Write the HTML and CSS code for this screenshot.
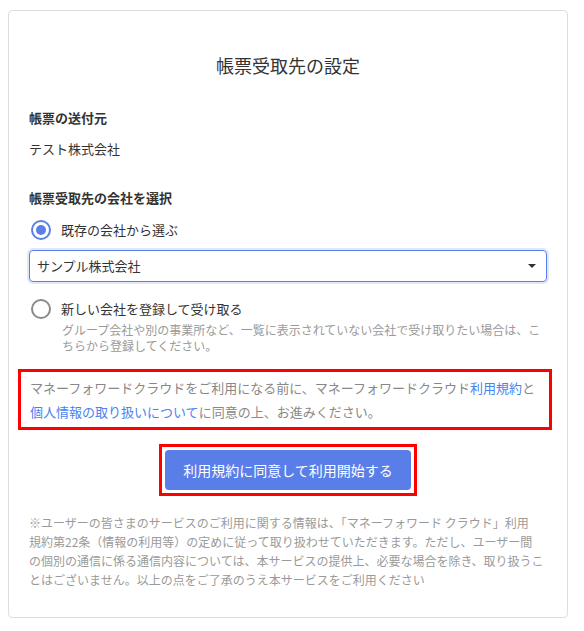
FILE: index.html
```html
<!DOCTYPE html>
<html lang="ja">
<head>
<meta charset="utf-8">
<title>帳票受取先の設定</title>
<link rel="stylesheet" href="styles.css">
</head>
<body>
<div class="card">
  <h1 class="title">帳票受取先の設定</h1>

  <div class="label label-first">帳票の送付元</div>
  <div class="value">テスト株式会社</div>

  <div class="label label-second">帳票受取先の会社を選択</div>

  <div class="radio-row radio-row-first">
    <span class="radio radio-on"></span>
    <span class="radio-label">既存の会社から選ぶ</span>
  </div>

  <div class="select">
    <span class="select-text">サンプル株式会社</span>
    <span class="select-arrow"></span>
  </div>

  <div class="radio-row radio-row-second">
    <span class="radio"></span>
    <span class="radio-label">新しい会社を登録して受け取る</span>
  </div>
  <p class="helper">グループ会社や別の事業所など、一覧に表示されていない会社で受け取りたい場合は、こちらから登録してください。</p>

  <div class="terms">マネーフォワードクラウドをご利用になる前に、マネーフォワードクラウド<a class="link" href="#">利用規約</a>と<a class="link" href="#">個人情報の取り扱いについて</a>に同意の上、お進みください。</div>

  <div class="btn-area">
    <span class="btn-frame"><button class="btn" type="button">利用規約に同意して利用開始する</button></span>
  </div>

  <p class="note">※ユーザーの皆さまのサービスのご利用に関する情報は、「マネーフォワード クラウド」利用<br>規約第22条（情報の利用等）の定めに従って取り扱わせていただきます。ただし、ユーザー間<br>の個別の通信に係る通信内容については、本サービスの提供上、必要な場合を除き、取り扱うこ<br>とはございません。以上の点をご了承のうえ本サービスをご利用ください</p>
</div>
</body>
</html>
```

FILE: styles.css
```css
* { box-sizing: border-box; }

html, body {
  margin: 0;
  padding: 0;
  background: #ffffff;
}

body {
  font-family: "Noto Sans CJK JP", "Noto Sans", sans-serif;
  color: #333333;
}

.card {
  margin: 10px 0 0 8px;
  width: 560px;
  height: 608px;
  border: 1px solid #dedede;
  border-radius: 4px;
  padding: 0 20px;
}

.title {
  margin: 41px 0 0;
  font-size: 18px;
  line-height: 26px;
  font-weight: normal;
  text-align: center;
  color: #333333;
}

.label {
  font-size: 13px;
  line-height: 20px;
  font-weight: bold;
  color: #333333;
}

.label-first { margin-top: 30px; }
.label-second { margin-top: 29px; }

.value {
  margin-top: 11px;
  font-size: 13px;
  line-height: 20px;
}

.radio-row {
  display: flex;
  align-items: center;
  gap: 10px;
  height: 20px;
  padding-left: 2px;
}

.radio-row-first { margin-top: 12px; }
.radio-row-second { margin-top: 17px; }

.radio {
  width: 20px;
  height: 20px;
  border-radius: 50%;
  border: 2px solid #8a8a8a;
  background: #ffffff;
  display: flex;
  align-items: center;
  justify-content: center;
  flex: none;
}

.radio-on {
  border-color: #5b7fe8;
}

.radio-on::after {
  content: "";
  width: 10px;
  height: 10px;
  border-radius: 50%;
  background: #5b7fe8;
}

.radio-label {
  font-size: 13px;
  line-height: 20px;
  color: #333333;
}

.select {
  margin-top: 10px;
  height: 32px;
  border: 1px solid #5b7fe8;
  border-radius: 4px;
  box-shadow: 0 0 0 2px rgba(91, 127, 232, 0.18);
  display: flex;
  align-items: center;
  justify-content: space-between;
  padding: 0 10px 0 7px;
}

.select-text {
  font-size: 13px;
  line-height: 20px;
  color: #333333;
}

.select-arrow {
  width: 0;
  height: 0;
  border-left: 4px solid transparent;
  border-right: 4px solid transparent;
  border-top: 4px solid #333333;
}

.helper {
  margin: 3px 0 0 33px;
  font-size: 12px;
  line-height: 16px;
  color: #9a9a9a;
}

.terms {
  margin: 15px 0 0 -11px;
  width: 534px;
  border: 3px solid #ff0000;
  padding: 4px 9px 3px;
  font-size: 13px;
  line-height: 24px;
  color: #888888;
}

.link {
  color: #4a82f0;
  text-decoration: none;
}

.btn-area {
  margin-top: 14px;
  display: flex;
  justify-content: center;
}

.btn-frame {
  display: inline-block;
  border: 3px solid #ff0000;
  padding: 3px;
  line-height: 0;
}

.btn {
  height: 40px;
  padding: 0 18px;
  border: none;
  border-radius: 4px;
  background: #5a7ee8;
  color: #ffffff;
  font-family: "Noto Sans CJK JP", "Noto Sans", sans-serif;
  font-size: 14px;
  line-height: 20px;
  cursor: pointer;
}

.note {
  margin: 17px 0 0;
  font-size: 12px;
  line-height: 19px;
  color: #9a9a9a;
}
```
